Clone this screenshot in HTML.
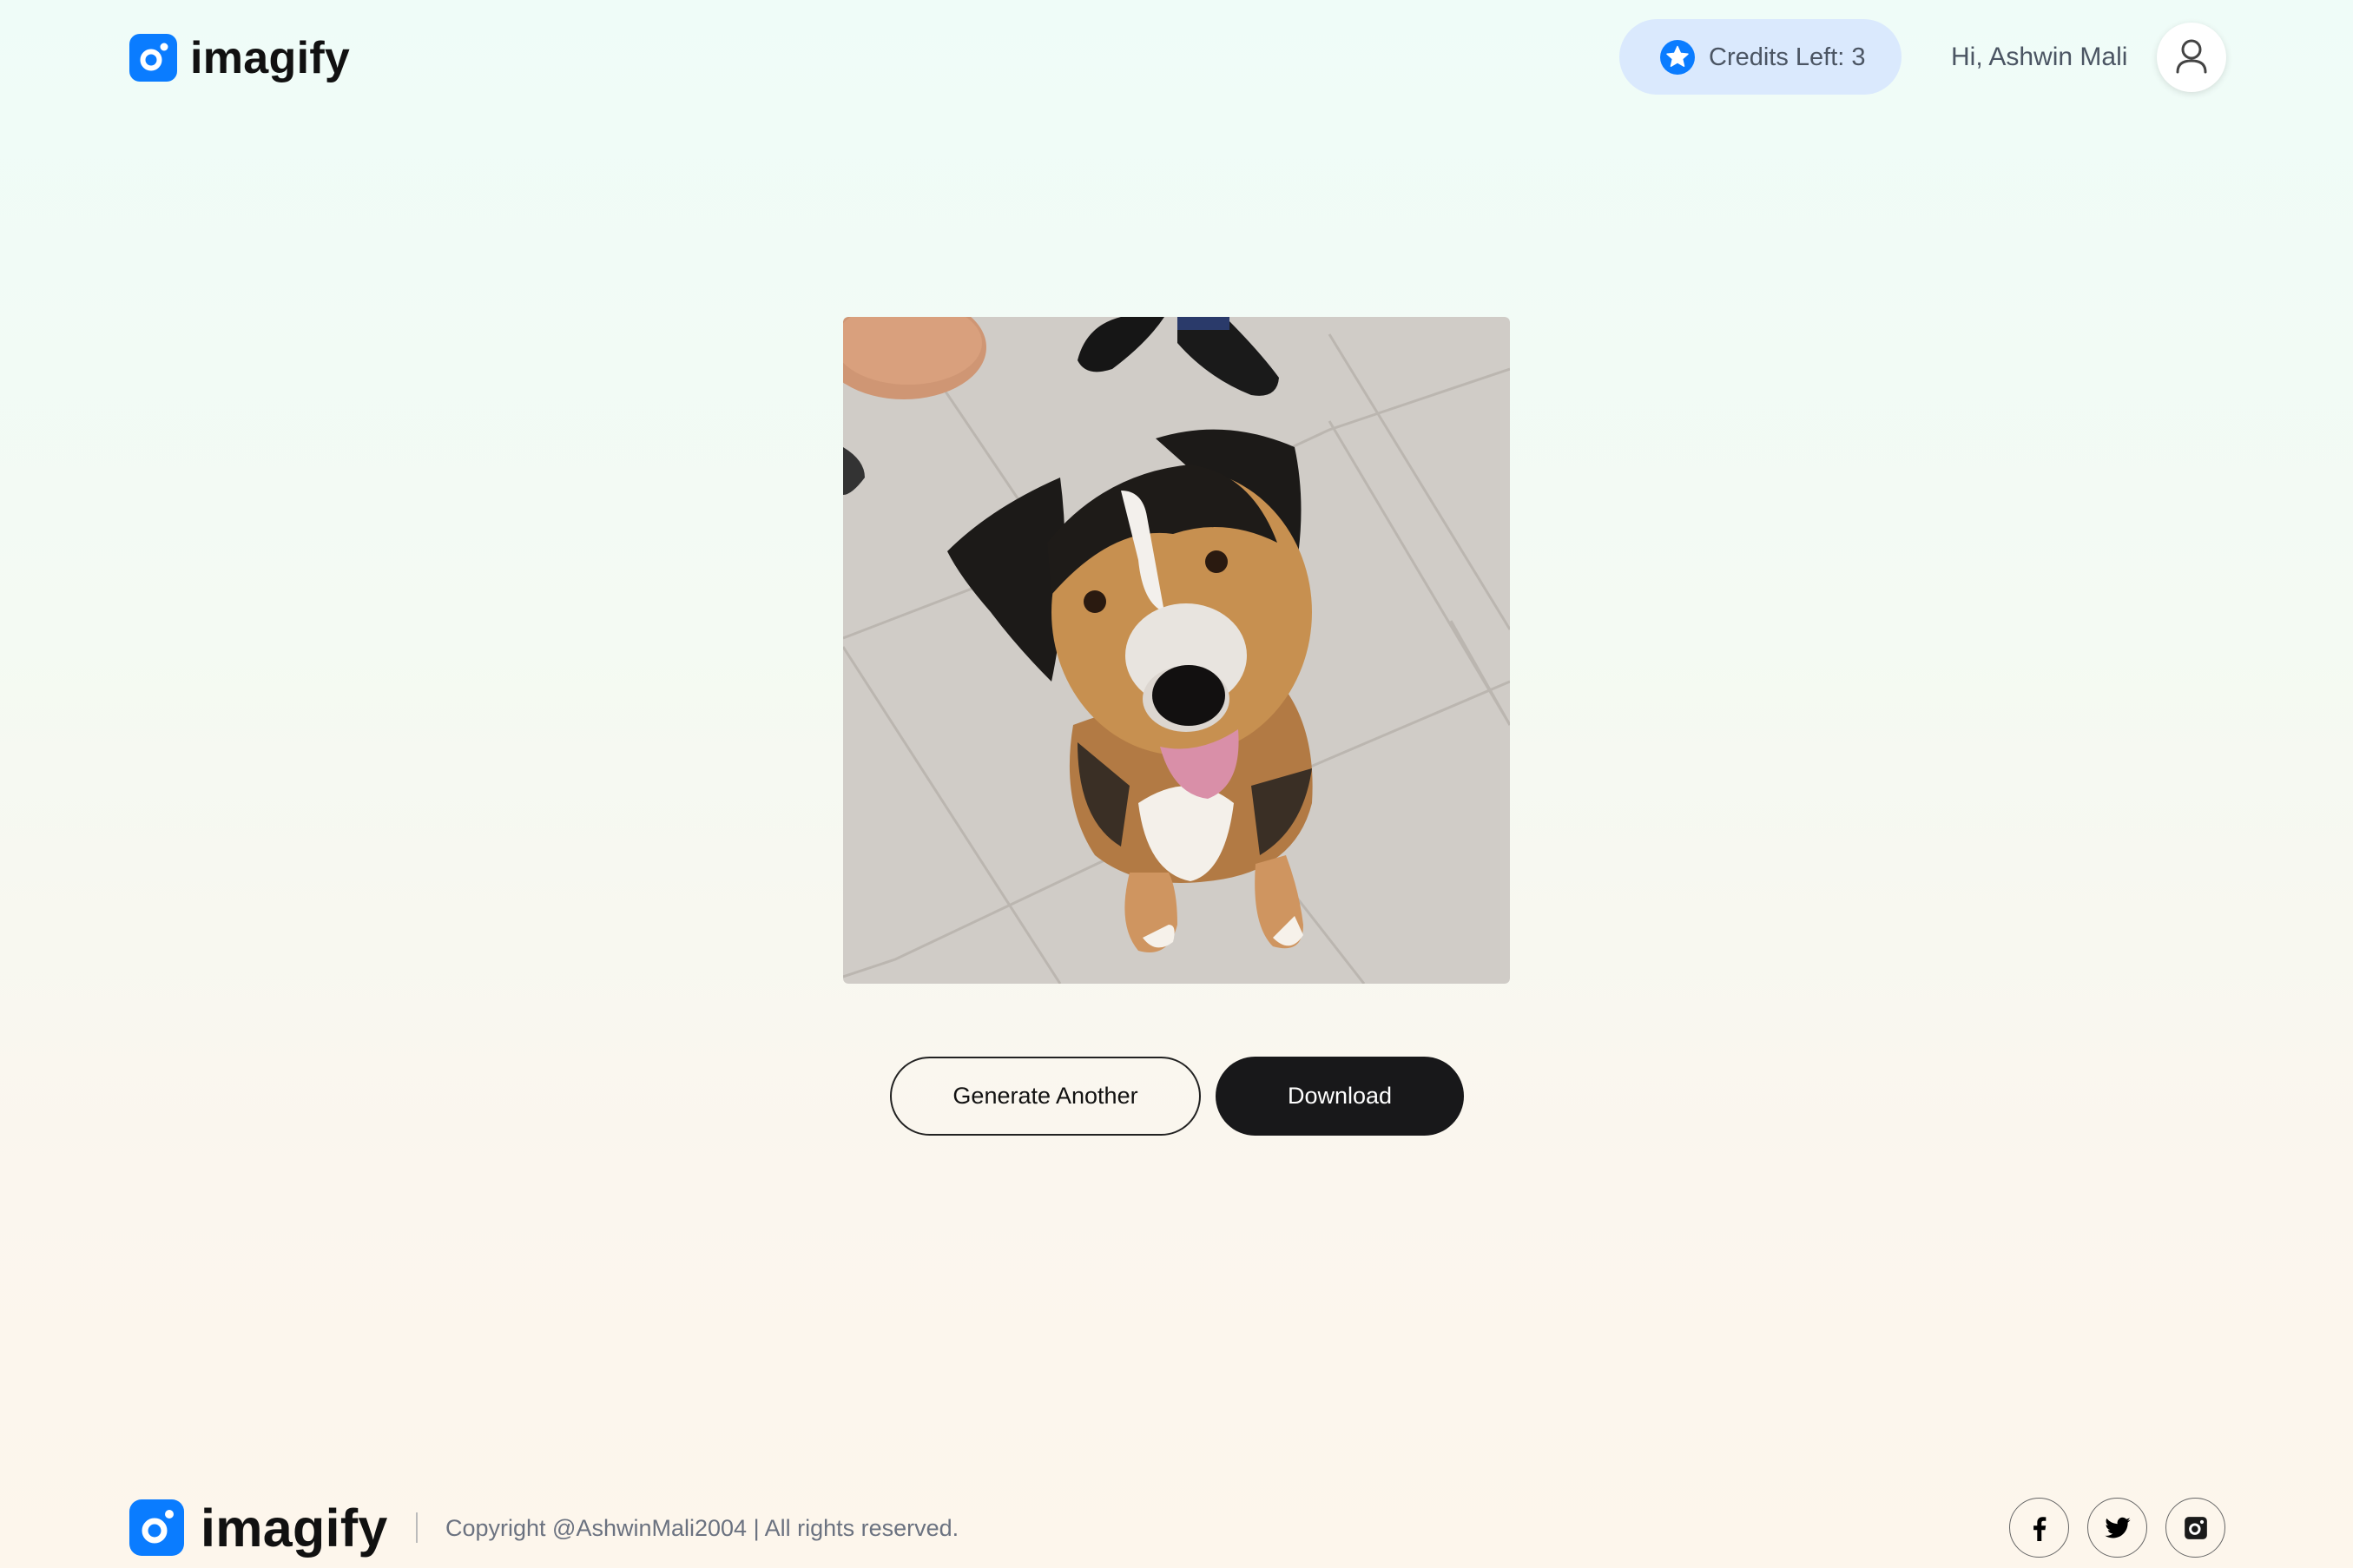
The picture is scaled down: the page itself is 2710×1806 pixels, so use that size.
<!DOCTYPE html>
<html><head><meta charset="utf-8"><style>
*{margin:0;padding:0;box-sizing:border-box}
html,body{width:2710px;height:1806px;overflow:hidden}
body{background:linear-gradient(180deg,#effcf8 0%,#f4faf3 40%,#fbf6ee 75%,#fdf6ec 100%);font-family:"Liberation Sans",sans-serif;position:relative}
.abs{position:absolute}
.logoicon{background:#0a7cff;border-radius:12px}
.logotext{font-weight:bold;color:#111;letter-spacing:0.3px}
.pill{left:1865px;top:22px;width:325px;height:87px;border-radius:44px;background:#dae9fd;}
.btn{border-radius:46px;font-size:27px;display:flex;align-items:center;justify-content:center}
.soc{width:69px;height:69px;border:1.5px solid #666;border-radius:50%;top:1725px;display:flex;align-items:center;justify-content:center}
</style></head><body>
<div class="abs logoicon" style="left:149px;top:39px;width:55px;height:55px">
<svg width="55" height="55" viewBox="0 0 55 55"><circle cx="25" cy="30" r="9.5" fill="none" stroke="#fff" stroke-width="6"/><circle cx="40" cy="15" r="4.5" fill="#fff"/></svg></div>
<div class="abs logotext" style="left:219px;top:32px;font-size:52px;line-height:70px">imagify</div>

<div class="abs pill"></div>
<svg class="abs" style="left:1911px;top:45px" width="42" height="42" viewBox="0 0 42 42"><circle cx="21" cy="21" r="20" fill="#0a7cff"/><path d="M21 8.5 L24.5 16.4 L33 17.2 L26.6 22.8 L28.5 31.2 L21 26.8 L13.5 31.2 L15.4 22.8 L9 17.2 L17.5 16.4 Z" fill="#fff" stroke="#fff" stroke-width="1.5" stroke-linejoin="round"/></svg>
<div class="abs" style="left:1968px;top:46px;font-size:29px;color:#4b5563;line-height:40px">Credits Left: 3</div>
<div class="abs" style="left:2247px;top:46px;font-size:30px;color:#4b5563;line-height:40px">Hi, Ashwin Mali</div>
<div class="abs" style="left:2484px;top:26px;width:80px;height:80px;border-radius:50%;background:#fff;box-shadow:0 2px 8px rgba(0,0,0,0.12)"></div>
<svg class="abs" style="left:2484px;top:26px" width="80" height="80" viewBox="0 0 80 80"><circle cx="40" cy="31" r="10" fill="none" stroke="#444" stroke-width="3"/><path d="M24 57 Q24 44 40 44 Q56 44 56 57" fill="none" stroke="#444" stroke-width="3" stroke-linecap="round"/></svg>

<svg class="abs" style="left:971px;top:365px;border-radius:6px" width="768" height="768" viewBox="0 0 768 768">
<defs><clipPath id="c"><rect width="768" height="768" rx="6"/></clipPath></defs>
<g clip-path="url(#c)">
<rect width="768" height="768" fill="#d0ccc7"/>
<g stroke="#bbb6b0" stroke-width="3" fill="none">
<path d="M0 370 L260 270 L560 130 L768 60"/><path d="M0 760 L60 740 L440 560 L768 420"/><path d="M0 380 L250 768"/><path d="M60 0 L330 400"/><path d="M560 20 L768 360"/><path d="M500 640 L600 768"/><path d="M700 350 L768 470"/><path d="M560 120 L768 470"/>
</g>
<ellipse cx="70" cy="35" rx="95" ry="60" fill="#cf9674"/><ellipse cx="75" cy="30" rx="85" ry="48" fill="#d9a07d"/>
<path d="M270 50 Q280 10 320 0 L370 0 Q350 30 310 60 Q280 70 270 50Z" fill="#161616"/>
<path d="M385 0 L440 0 Q480 40 502 70 Q500 95 470 90 Q420 70 385 30Z" fill="#1a1a1a"/>
<rect x="385" y="0" width="60" height="15" fill="#2a3a6a"/>
<path d="M0 150 Q25 165 25 185 Q10 205 0 205Z" fill="#333"/>
<path d="M265 470 Q250 560 290 620 Q340 660 420 650 Q520 640 540 560 Q545 480 510 430 Q400 420 265 470Z" fill="#b27a44"/>
<path d="M270 490 Q270 580 320 610 L330 540Z" fill="#3a2f25"/>
<path d="M540 520 Q530 590 480 620 L470 540Z" fill="#3a2f25"/>
<path d="M340 560 Q350 640 400 650 Q440 640 450 560 Q400 520 340 560Z" fill="#f4f0ea"/>
<path d="M330 640 Q315 700 340 730 Q375 740 385 700 Q385 660 375 640Z" fill="#cf9560"/>
<path d="M475 630 Q470 700 495 725 Q530 735 530 700 Q525 660 510 620Z" fill="#cf9560"/>
<path d="M345 715 Q360 735 380 720 Q385 700 375 700Z" fill="#f6f1ea"/><path d="M495 715 Q515 735 530 712 L520 690Z" fill="#f6f1ea"/>
<path d="M120 270 Q170 220 250 185 Q265 300 240 420 Q200 380 170 340 Q135 300 120 270Z" fill="#1c1a18"/>
<path d="M360 140 Q440 115 520 150 Q535 220 520 300 Q480 250 450 220Z" fill="#1c1a18"/>
<ellipse cx="390" cy="340" rx="150" ry="165" fill="#c79050"/>
<path d="M235 260 Q300 180 400 170 Q470 180 500 260 Q440 230 380 250 Q310 240 240 320Z" fill="#1e1b18"/>
<path d="M320 200 Q345 200 350 230 L370 340 Q345 330 340 280Z" fill="#f3f0ec"/>
<ellipse cx="395" cy="390" rx="70" ry="60" fill="#e8e4df"/>
<ellipse cx="395" cy="440" rx="50" ry="38" fill="#dcd6d0"/>
<ellipse cx="398" cy="436" rx="42" ry="35" fill="#121010"/>
<path d="M365 495 Q410 505 455 475 Q460 540 420 555 Q380 550 365 495Z" fill="#d98fa8"/>
<circle cx="290" cy="328" r="13" fill="#2a1a10"/><circle cx="430" cy="282" r="13" fill="#2a1a10"/>
</g></svg>

<div class="abs btn" style="left:1025px;top:1217px;width:358px;height:91px;border:2px solid #222;color:#111">Generate Another</div>
<div class="abs btn" style="left:1400px;top:1217px;width:286px;height:91px;background:#18181a;color:#fff">Download</div>

<div class="abs logoicon" style="left:149px;top:1727px;width:63px;height:65px;border-radius:14px">
<svg width="63" height="65" viewBox="0 0 63 65"><circle cx="29" cy="36" r="11" fill="none" stroke="#fff" stroke-width="7"/><circle cx="46" cy="17" r="5" fill="#fff"/></svg></div>
<div class="abs logotext" style="left:231px;top:1719px;font-size:61px;line-height:82px">imagify</div>
<div class="abs" style="left:479px;top:1742px;width:2px;height:35px;background:#bbb"></div>
<div class="abs" style="left:513px;top:1743px;font-size:27px;color:#6b7280;line-height:34px">Copyright @AshwinMali2004 | All rights reserved.</div>

<div class="abs soc" style="left:2314px"><svg width="36" height="36" viewBox="0 0 24 24"><path d="M13.5 22v-8.5h2.8l.5-3.3h-3.3V8.1c0-1 .3-1.6 1.7-1.6h1.7V3.6c-.3 0-1.3-.1-2.5-.1-2.5 0-4.2 1.5-4.2 4.3v2.4H7.4v3.3h2.8V22z" fill="#000"/></svg></div>
<div class="abs soc" style="left:2404px"><svg width="32" height="32" viewBox="0 0 24 24"><path d="M23 5a9 9 0 0 1-2.6.7 4.5 4.5 0 0 0 2-2.5 9 9 0 0 1-2.9 1.1 4.5 4.5 0 0 0-7.7 4.1A12.8 12.8 0 0 1 2.5 3.7a4.5 4.5 0 0 0 1.4 6 4.5 4.5 0 0 1-2-.6 4.5 4.5 0 0 0 3.6 4.5 4.5 4.5 0 0 1-2 .1 4.5 4.5 0 0 0 4.2 3.1A9 9 0 0 1 1 18.6 12.8 12.8 0 0 0 7.9 20.6c8.3 0 12.8-6.9 12.8-12.8v-.6A9 9 0 0 0 23 5z" fill="#000"/></svg></div>
<div class="abs soc" style="left:2494px"><svg width="28" height="28" viewBox="0 0 24 24"><rect x="1" y="1" width="22" height="22" rx="4" fill="#1a1a1a"/><circle cx="11" cy="13" r="4.5" fill="none" stroke="#fff" stroke-width="2.5"/><circle cx="18" cy="6" r="1.8" fill="#fff"/></svg></div>
</body></html>
